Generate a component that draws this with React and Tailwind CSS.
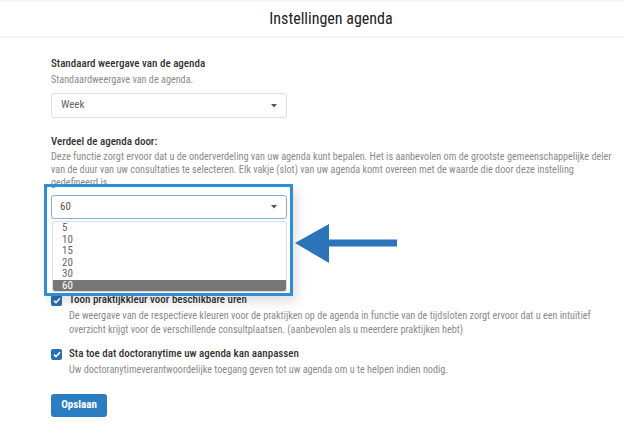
import React from "react";

const font = { fontFamily: "Roboto, 'Liberation Sans', sans-serif" };

function Caret() {
  return (
    <svg width="6" height="4" viewBox="0 0 6 4" className="shrink-0">
      <path d="M0 0 L6 0 L3 3.5 Z" fill="#555" />
    </svg>
  );
}

function Check() {
  return (
    <div className="w-[11px] h-[11px] rounded-[2px] bg-[#2a6fb5] flex items-center justify-center shrink-0">
      <svg width="8" height="7" viewBox="0 0 8 7">
        <path d="M1 3.6 L3 5.6 L7 1.2" stroke="#fff" strokeWidth="1.6" fill="none" />
      </svg>
    </div>
  );
}

export default function App() {
  return (
    <div
      className="relative w-[624px] h-[434px] bg-white overflow-hidden [font-stretch:condensed]"
      style={font}
    >
      <div className="h-[38px] border-t-2 border-b-2 border-[#f3f3f3] flex items-center justify-center pl-[38px]">
        <span className="text-[16px] text-[#222] leading-none">Instellingen agenda</span>
      </div>

      <div className="pl-[51px] pt-[19px]">
        <div className="text-[11px] font-medium text-[#333] leading-[14px]">Standaard weergave van de agenda</div>
        <div className="text-[10.2px] text-[#8a8a8a] leading-[14px] mt-[2px]">Standaardweergave van de agenda.</div>
        <div className="mt-[6px] w-[236px] h-[25px] border border-[#dedede] rounded-[3px] flex items-center justify-between pl-[9px] pr-[9px]">
          <span className="text-[11px] text-[#666]">Week</span>
          <Caret />
        </div>

        <div className="mt-[17px] text-[11px] font-medium text-[#333] leading-[14px]">Verdeel de agenda door:</div>
        <div className="text-[10.2px] text-[#8a8a8a] leading-[13px] mt-[1px] max-w-[566px]">
          Deze functie zorgt ervoor dat u de onderverdeling van uw agenda kunt bepalen. Het is aanbevolen om de grootste gemeenschappelijke deler van de duur van uw consultaties te selecteren. Elk vakje (slot) van uw agenda komt overeen met de waarde die door deze instelling gedefineerd is.
        </div>
        <div className="mt-[6px] w-[236px] h-[24px] border border-[#7fb0dc] rounded-[3px] flex items-center justify-between pl-[8px] pr-[9px]">
          <span className="text-[11px] text-[#555]">60</span>
          <Caret />
        </div>

        <div className="mt-[74px] flex items-center gap-[7px] h-[14px]">
          <Check />
          <span className="text-[11px] font-medium text-[#333] leading-[14px]">Toon praktijkkleur voor beschikbare uren</span>
        </div>
        <div className="ml-[18px] text-[10.2px] text-[#8a8a8a] leading-[14px] mt-[2px] max-w-[545px]">
          De weergave van de respectieve kleuren voor de praktijken op de agenda in functie van de tijdsloten zorgt ervoor dat u een intuïtief overzicht krijgt voor de verschillende consultplaatsen. (aanbevolen als u meerdere praktijken hebt)
        </div>

        <div className="mt-[10px] flex items-center gap-[7px] h-[14px]">
          <Check />
          <span className="text-[11px] font-medium text-[#333] leading-[14px]">Sta toe dat doctoranytime uw agenda kan aanpassen</span>
        </div>
        <div className="ml-[18px] text-[10.2px] text-[#8a8a8a] leading-[14px] mt-[2px]">
          Uw doctoranytimeverantwoordelijke toegang geven tot uw agenda om u te helpen indien nodig.
        </div>

        <button className="mt-[17px] w-[56px] h-[23px] rounded-[3px] bg-[#2a7dc0] text-white text-[11px] font-bold flex items-center justify-center">
          Opslaan
        </button>
      </div>

      {/* dropdown list overlay */}
      <div className="absolute left-[52px] top-[221px] w-[235px] h-[71px] bg-white border border-[#ddd] rounded-[3px] flex flex-col text-[11px] text-[#666] leading-[11.6px] overflow-hidden">
        <div className="pl-[9px]">5</div>
        <div className="pl-[9px]">10</div>
        <div className="pl-[9px]">15</div>
        <div className="pl-[9px]">20</div>
        <div className="pl-[9px]">30</div>
        <div className="pl-[9px] bg-[#777] text-white flex-1 flex items-center">60</div>
      </div>

      {/* blue highlight box */}
      <div className="absolute left-[44px] top-[184px] w-[249px] h-[112px] border-[3px] border-[#2f8fd6] shadow-[4px_6px_10px_rgba(0,0,0,0.12)]" />

      {/* arrow */}
      <svg className="absolute left-[293px] top-[222px]" width="108" height="44" viewBox="0 0 108 44">
        <path d="M2 21 L36 2 L36 17.5 L104 17.5 L104 24.5 L36 24.5 L36 41 Z" fill="#2b74b8" />
      </svg>
    </div>
  );
}
